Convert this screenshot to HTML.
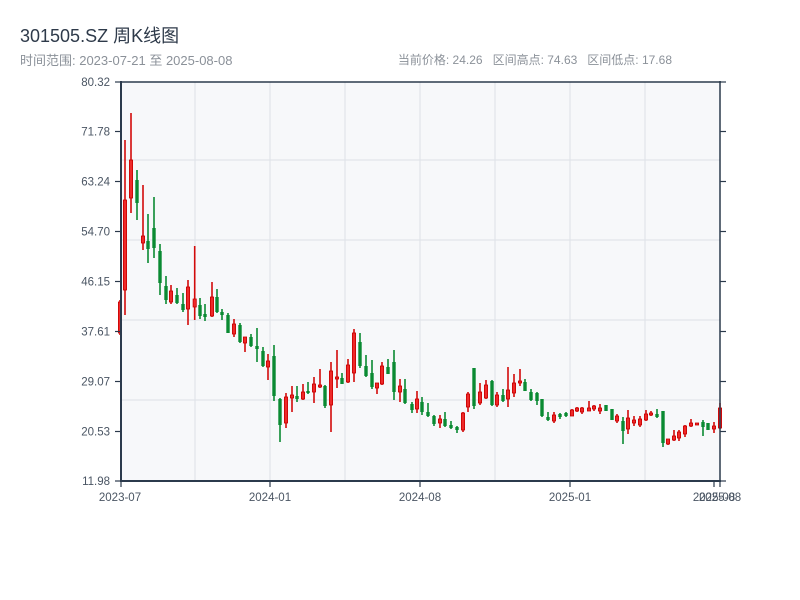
<!DOCTYPE html>
<html><head><meta charset="utf-8"><style>
html,body{margin:0;padding:0;background:#fff;width:800px;height:600px;overflow:hidden}
body{font-family:"Liberation Sans","Noto Sans CJK SC",sans-serif;position:relative}
.t{position:absolute;left:20px;top:22px;font-size:18px;color:#2e3a4a;white-space:nowrap}
.s{position:absolute;left:20px;top:50px;font-size:13px;color:#8b9199;white-space:nowrap}
.r{position:absolute;right:128px;top:51px;font-size:12px;color:#8b9199;white-space:nowrap}
svg{position:absolute;left:0;top:0}
</style></head><body>
<div class="t">301505.SZ 周K线图</div>
<div class="s">时间范围: 2023-07-21 至 2025-08-08</div>
<div class="r">当前价格: 24.26&nbsp;&nbsp;&nbsp;区间高点: 74.63&nbsp;&nbsp;&nbsp;区间低点: 17.68</div>
<svg id="c" width="800" height="600" xmlns="http://www.w3.org/2000/svg" font-family="Liberation Sans, sans-serif">
<rect x="121" y="82" width="599" height="399" fill="#f7f8fa"/>
<g stroke="#e1e4e9" stroke-width="1.2">
<line x1="195" y1="82" x2="195" y2="481"/><line x1="270" y1="82" x2="270" y2="481"/>
<line x1="345" y1="82" x2="345" y2="481"/><line x1="420" y1="82" x2="420" y2="481"/>
<line x1="495" y1="82" x2="495" y2="481"/><line x1="570" y1="82" x2="570" y2="481"/>
<line x1="645" y1="82" x2="645" y2="481"/>
<line x1="121" y1="160" x2="720" y2="160"/><line x1="121" y1="240" x2="720" y2="240"/>
<line x1="121" y1="320" x2="720" y2="320"/><line x1="121" y1="400" x2="720" y2="400"/>
</g>
<g id="k"></g>
<g stroke="#2b3a4c" stroke-width="2" fill="none">
<line x1="120" y1="82" x2="721" y2="82" stroke-width="1.5"/>
<line x1="121" y1="81" x2="121" y2="482"/>
<line x1="720" y1="81" x2="720" y2="482" stroke-width="1.5"/>
<line x1="120" y1="481" x2="721" y2="481"/>
</g>
<g stroke="#2b3a4c" stroke-width="1.2">
<line x1="115" y1="82" x2="121" y2="82"/><line x1="115" y1="131.5" x2="121" y2="131.5"/>
<line x1="115" y1="181.5" x2="121" y2="181.5"/><line x1="115" y1="231.5" x2="121" y2="231.5"/>
<line x1="115" y1="281.5" x2="121" y2="281.5"/><line x1="115" y1="331.5" x2="121" y2="331.5"/>
<line x1="115" y1="381.5" x2="121" y2="381.5"/><line x1="115" y1="431.5" x2="121" y2="431.5"/>
<line x1="115" y1="481" x2="121" y2="481"/>
<line x1="720" y1="82" x2="726" y2="82"/><line x1="720" y1="131.5" x2="726" y2="131.5"/>
<line x1="720" y1="181.5" x2="726" y2="181.5"/><line x1="720" y1="231.5" x2="726" y2="231.5"/>
<line x1="720" y1="281.5" x2="726" y2="281.5"/><line x1="720" y1="331.5" x2="726" y2="331.5"/>
<line x1="720" y1="381.5" x2="726" y2="381.5"/><line x1="720" y1="431.5" x2="726" y2="431.5"/>
<line x1="720" y1="481" x2="726" y2="481"/>
<line x1="121" y1="481" x2="121" y2="487"/><line x1="270" y1="481" x2="270" y2="487"/>
<line x1="420" y1="481" x2="420" y2="487"/><line x1="570" y1="481" x2="570" y2="487"/>
<line x1="714" y1="481" x2="714" y2="487"/><line x1="720" y1="481" x2="720" y2="487"/>
</g>
<g font-size="11.5" fill="#4a5563" text-anchor="end">
<text x="110" y="86">80.32</text><text x="110" y="135.5">71.78</text>
<text x="110" y="185.5">63.24</text><text x="110" y="235.5">54.70</text>
<text x="110" y="285.5">46.15</text><text x="110" y="335.5">37.61</text>
<text x="110" y="385.5">29.07</text><text x="110" y="435.5">20.53</text>
<text x="110" y="485">11.98</text>
</g>
<g font-size="11.5" fill="#4a5563" text-anchor="middle">
<text x="120" y="501">2023-07</text><text x="270" y="501">2024-01</text>
<text x="420" y="501">2024-08</text><text x="570" y="501">2025-01</text>
<text x="714" y="501">2025-08</text><text x="720" y="501">2025-08</text>
</g>
</svg>
<script>
var R='r',G='g';
var d=[
[120,300,335,302,333,R],[125,140,315,200,290,R],[131,113,213,160,198,R],[137,170,220,180,203,G],
[143,185,250,236,243,R],[148,214,263,241,249,G],[154,197,258,228,248,G],[160,244,295,251,283,G],
[166,276,304,286,300,G],[171,285,304,291,302,R],[177,288,304,295,303,G],[183,293,312,304,310,G],
[188,280,325,287,309,R],
[194.7,246,320,299,307,R],[200,298,319,305,316,G],[205,304,321,314,317,G],[212,282,317,297,316,R],
[217,289,313,297,312,G],[222,309,320,312,315,G],[228,313,333,315,333,G],[234,319,337,324,334,R],
[240,323,343,325,342,G],[245,337,352,337,343,R],[251,334,347,337,346,G],[257,328,362,346,349,G],
[263,347,367,351,366,G],[268,354,380,361,367,R],[274,345,401,356,396,G],[280,398,442,399,425,G],
[286,393,428,397,423,R],[292,386,412,395,398,R],[297,386,402,396,399,G],[303,384,400,392,399,R],
[308,382,394,391,393,G],[314,377,403,384,392,R],[320,369,388,385,387,R],[325,385,408,386,406,G],
[331,362,432,371,405,R],[337,350,388,377,379,R],[342,373,384,378,384,G],[348,359,383,365,382,R],
[354,329,382,333,373,R],[360,333,368,342,366,G],[366,355,377,366,376,G],[372,360,389,373,387,G],
[377,383,394,383,388,R],[382,362,385,366,384,R],[388,359,374,367,374,G],
[394,350,400,362,392,G],[400,379,402,386,392,R],[405,379,404,389,403,G],[412,402,413,404,410,G],
[417,391,413,399,409,R],[422,397,415,402,412,G],[428,403,417,412,416,G],[434,415,426,416,424,G],
[440,415,428,419,423,R],[445,412,427,419,426,G],[451,421,429,425,428,G],[457,426,433,427,430,G],
[463,412,432,413,430,R],[468,392,412,394,407,R],[474,368,409,368,406,G],[480,383,405,392,403,R],
[486,380,399,385,398,R],[492,380,406,381,405,G],[497,392,407,395,405,R],[503,389,402,395,401,G],
[508,367,407,390,399,R],[514,374,397,383,393,R],[520,369,386,381,383,R],[525,379,391,382,391,G],
[531,389,401,392,400,G],[537,392,405,393,401,G],[542,399,417,399,416,G],[548,412,421,417,420,G],
[554,412,423,415,421,R],[560,413,419,414,417,G],[566,412,417,413,416,G],[572,409,416,410,416,R],
[577,407,412,408,411,R],[582,407,414,408,412,R],[589,401,411,408,411,R],[594,405,411,406,409,R],
[600,404,414,408,411,R],[606,405,411,405,411,G],[612,409,420,409,420,G],[617,414,423,416,421,R],
[623,417,444,421,431,G],[628,410,434,418,429,R],[634,416,426,420,423,R],[640,416,427,419,425,R],
[646,410,421,414,420,R],[651,411,416,413,415,R],[657,409,418,414,417,G],[663,411,447,411,443,G],
[668,439,445,439,444,R],[674,430,441,436,440,R],[679,430,441,432,438,R],[685,425,437,426,434,R],
[691,419,427,423,426,R],[697,423,425,423,425,R],[703,420,436,422,427,G],[708,423,430,423,430,G],
[714,422,433,426,429,R],[720,403,429,408,428,R]];
var s='';
d.forEach(function(c){
 var col=c[5]==R?'#d20a0a':'#0a8a32';
 s+='<line x1="'+c[0]+'" y1="'+c[1]+'" x2="'+c[0]+'" y2="'+c[2]+'" stroke="'+col+'" stroke-width="1.6"/>';
 var h=Math.max(c[4]-c[3],1.5);
 if(c[5]==R) s+='<rect x="'+(c[0]-1.6)+'" y="'+c[3]+'" width="3.2" height="'+h+'" fill="#ee2a2a" stroke="#c80000" stroke-width="0.8"/>';
 else s+='<rect x="'+(c[0]-1.7)+'" y="'+c[3]+'" width="3.4" height="'+h+'" fill="#0a8a32"/>';
});
document.getElementById('k').innerHTML=s;
</script>
</body></html>
